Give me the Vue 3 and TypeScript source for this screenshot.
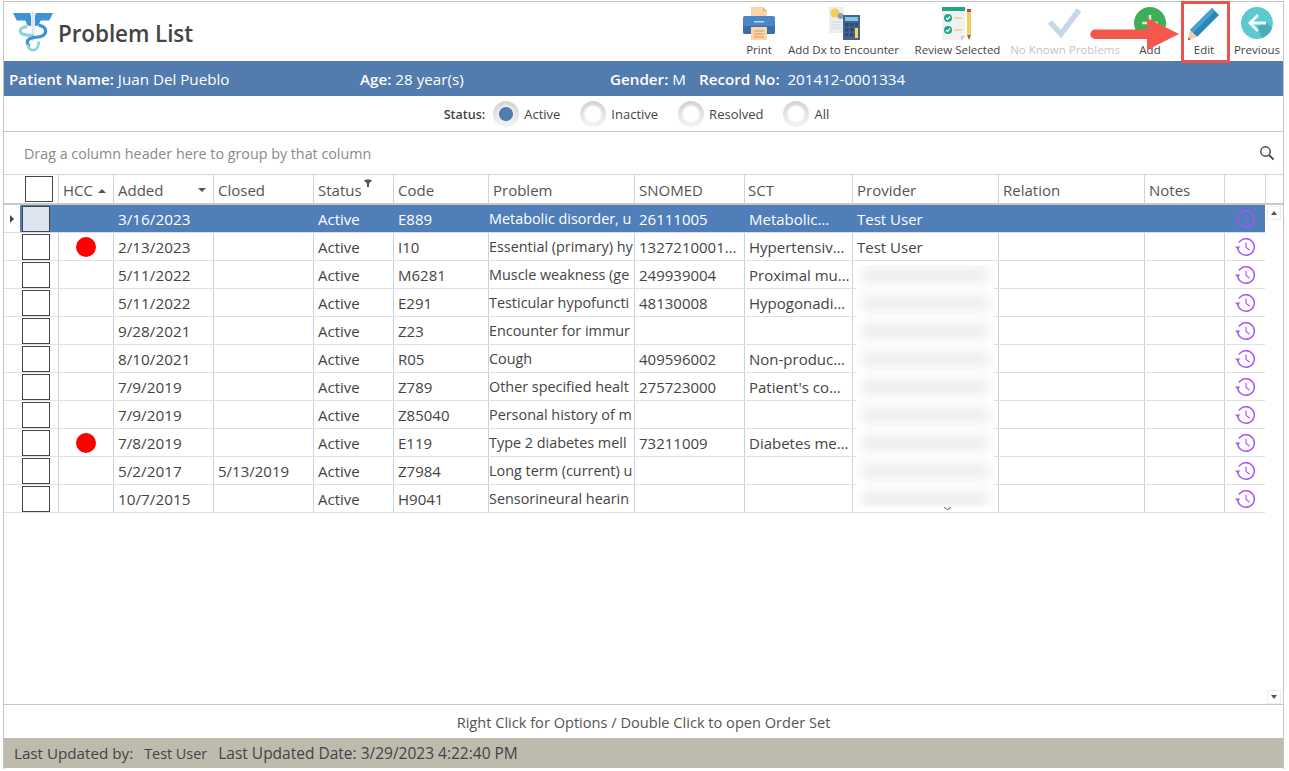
<script setup lang="ts">
interface Row { added: string; closed: string; code: string; problem: string; snomed: string; sct: string; provider: string; hcc: boolean }
const rows: Row[] = [
  { added: '3/16/2023', closed: '', code: 'E889', problem: 'Metabolic disorder, u', snomed: '26111005', sct: 'Metabolic…', provider: 'Test User', hcc: false },
  { added: '2/13/2023', closed: '', code: 'I10', problem: 'Essential (primary) hy', snomed: '1327210001…', sct: 'Hypertensiv…', provider: 'Test User', hcc: true },
  { added: '5/11/2022', closed: '', code: 'M6281', problem: 'Muscle weakness (ge', snomed: '249939004', sct: 'Proximal mu…', provider: '', hcc: false },
  { added: '5/11/2022', closed: '', code: 'E291', problem: 'Testicular hypofuncti', snomed: '48130008', sct: 'Hypogonadi…', provider: '', hcc: false },
  { added: '9/28/2021', closed: '', code: 'Z23', problem: 'Encounter for immur', snomed: '', sct: '', provider: '', hcc: false },
  { added: '8/10/2021', closed: '', code: 'R05', problem: 'Cough', snomed: '409596002', sct: 'Non-produc…', provider: '', hcc: false },
  { added: '7/9/2019', closed: '', code: 'Z789', problem: 'Other specified healt', snomed: '275723000', sct: "Patient's co…", provider: '', hcc: false },
  { added: '7/9/2019', closed: '', code: 'Z85040', problem: 'Personal history of m', snomed: '', sct: '', provider: '', hcc: false },
  { added: '7/8/2019', closed: '', code: 'E119', problem: 'Type 2 diabetes mell', snomed: '73211009', sct: 'Diabetes me…', provider: '', hcc: true },
  { added: '5/2/2017', closed: '5/13/2019', code: 'Z7984', problem: 'Long term (current) u', snomed: '', sct: '', provider: '', hcc: false },
  { added: '10/7/2015', closed: '', code: 'H9041', problem: 'Sensorineural hearin', snomed: '', sct: '', provider: '', hcc: false },
]
const statuses = ['Active', 'Inactive', 'Resolved', 'All']
const blurLines = Array.from({ length: 9 }, (_, i) => i)
</script>

<template>
  <div class="frame">
    <header class="top">
      <div class="brand">
        <svg class="logo" viewBox="0 0 42 42" width="40" height="40">
          <path d="M0 1h18l1 4v10l-4-1-2-5H4z" fill="#3d93d6"/>
          <path d="M42 1H24l-1 4v10l4-1 2-5h9z" fill="#3d93d6"/>
          <rect x="19.500" y="0" width="3" height="30" fill="#dfe6ea"/>
          <path d="M15 15c-9 1-10 8-2 9l9 1" fill="none" stroke="#8fd3e2" stroke-width="3.400"/>
          <path d="M27 14c9 1 10 10 1 12-9 1-13 2-13 6 0 2 2 3 3 3" fill="none" stroke="#3d93d6" stroke-width="3.400"/>
          <path d="M27 31c0 5-2 9-6 9s-6-4-5-6" fill="none" stroke="#8fd3e2" stroke-width="3"/>
        </svg>
        <h1>Problem List</h1>
      </div>
      <nav class="tools">
        <div class="tool t-print">
          <svg viewBox="0 0 34 34" width="34" height="34">
            <path d="M9 1h12l4 4v10H9z" fill="#fbd5a9"/>
            <path d="M21 1l4 4h-4z" fill="#e8b583"/>
            <path d="M3 10h28a2 2 0 0 1 2 2v14a2 2 0 0 1-2 2H3a2 2 0 0 1-2-2V12a2 2 0 0 1 2-2z" fill="#4a86c5"/>
            <path d="M1 20h32v6a2 2 0 0 1-2 2H3a2 2 0 0 1-2-2z" fill="#3a6ea5"/>
            <rect x="12" y="15" width="10" height="1.500" fill="#bcd6ee"/>
            <path d="M9 21h16v13H9z" fill="#fbd5a9"/>
            <path d="M12 25h10M12 28h10M12 31h10" stroke="#d19a66" stroke-width="1.200"/>
          </svg>
          <span>Print</span>
        </div>
        <div class="tool t-dx">
          <svg viewBox="0 0 34 34" width="34" height="34">
            <rect x="2" y="1" width="15" height="26" fill="#eceff1"/>
            <circle cx="8" cy="7" r="4.500" fill="#f4cf4e"/>
            <circle cx="13.500" cy="10" r="3" fill="#8aa0b5"/>
            <path d="M4 16h10M4 19h10M4 22h10" stroke="#cfd6da"/>
            <rect x="16" y="9" width="17" height="25" fill="#46638c"/>
            <rect x="18" y="11" width="13" height="4" fill="#79c8ee"/>
            <path d="M18 17h3.500v3.500H18zM23 17h3.500v3.500H23zM28 17h3v3.500h-3zM18 22h3.500v3.500H18zM23 22h3.500v3.500H23zM18 27h3.500v3.500H18zM23 27h3.500v3.500H23z" fill="#2f4a70"/>
            <rect x="28" y="22" width="3" height="10" fill="#f4d75e"/>
          </svg>
          <span>Add Dx to Encounter</span>
        </div>
        <div class="tool t-review">
          <svg viewBox="0 0 34 34" width="34" height="34">
            <path d="M1 1h23v30l-4 4H1z" fill="#eff1f2"/>
            <rect x="1" y="1" width="23" height="4" fill="#1fa982"/>
            <path d="M20 35v-5h4z" fill="#c9cdd0"/>
            <circle cx="7" cy="12" r="4" fill="#1fa982"/>
            <circle cx="7" cy="24" r="4" fill="#1fa982"/>
            <path d="M5 12l1.500 1.500L9 10.500M5 24l1.500 1.500L9 22.500" stroke="#fff" fill="none" stroke-width="1.200"/>
            <path d="M13 12h8M13 24h8" stroke="#f0b35a" stroke-width="1.200"/>
            <rect x="26" y="3" width="4" height="3" fill="#d33a6b"/>
            <rect x="26" y="6" width="4" height="23" fill="#f2cd5d"/>
            <path d="M26 29h4l-2 5z" fill="#7a6a4a"/>
          </svg>
          <span>Review Selected</span>
        </div>
        <div class="tool t-none disabled">
          <svg viewBox="0 0 34 34" width="34" height="34">
            <path d="M2 16l11 12L31 4" fill="none" stroke="#c7d6e8" stroke-width="5.500"/>
          </svg>
          <span>No Known Problems</span>
        </div>
        <div class="tool t-add">
          <svg viewBox="0 0 34 34" width="34" height="34">
            <circle cx="17" cy="17" r="16" fill="#3fae58"/>
            <path d="M17 9v16M9 17h16" stroke="#d7f0dc" stroke-width="2.500"/>
          </svg>
          <span>Add</span>
        </div>
        <div class="tool t-edit">
          <svg viewBox="0 0 34 34" width="34" height="34">
            <path d="M3 24L25 2l7 7-22 22z" fill="#2a87b5"/>
            <path d="M25 2l3 3L6 27l-3-3z" fill="#45a5cf"/>
            <path d="M3 24l7 7-9 3z" fill="#f6c9ae"/>
            <path d="M1 31l3 3-3 .5z" fill="#d9534a"/>
          </svg>
          <span>Edit</span>
        </div>
        <div class="tool t-prev">
          <svg viewBox="0 0 34 34" width="34" height="34">
            <circle cx="17" cy="17" r="16" fill="#5cc9d2"/>
            <path d="M17 21l9-5 6 6a16 16 0 0 1-10 10z" fill="#47adb8"/>
            <path d="M18 9l-8 8 8 8M10 17h16" fill="none" stroke="#eefafa" stroke-width="3"/>
          </svg>
          <span>Previous</span>
        </div>
      </nav>
    </header>

    <section class="patient">
      <span class="p-name"><b>Patient Name:</b> Juan Del Pueblo</span>
      <span class="p-age"><b>Age:</b> 28 year(s)</span>
      <span class="p-gender"><b>Gender:</b> M</span>
      <span class="p-rec"><b>Record No:</b>&nbsp; 201412-0001334</span>
    </section>

    <section class="status">
      <b>Status:</b>
      <label v-for="(s, i) in statuses" :key="s" class="radio">
        <i class="dot" :class="{ on: i === 0 }"></i><span>{{ s }}</span>
      </label>
    </section>

    <section class="grid-panel">
      <div class="group">
        <span>Drag a column header here to group by that column</span>
        <svg viewBox="0 0 16 16" width="16" height="16" class="search">
          <circle cx="6.500" cy="6.500" r="4.700" fill="none" stroke="#444" stroke-width="1.400"/>
          <path d="M10 10l4.500 4.500" stroke="#444" stroke-width="1.800"/>
        </svg>
      </div>

      <div class="grid">
        <div class="head">
          <div class="c c0"></div>
          <div class="c c1 chk"><i class="box"></i></div>
          <div class="c c2">HCC<i class="up"></i></div>
          <div class="c c3">Added<i class="down"></i></div>
          <div class="c c4">Closed</div>
          <div class="c c5">Status
            <svg class="filter" viewBox="0 0 8 8" width="8" height="8"><path d="M0 1.500C0 0 8 0 8 1.500L5 4.500V8H3V4.500z" fill="#555"/></svg>
          </div>
          <div class="c c6">Code</div>
          <div class="c c7">Problem</div>
          <div class="c c8">SNOMED</div>
          <div class="c c9">SCT</div>
          <div class="c c10">Provider</div>
          <div class="c c11">Relation</div>
          <div class="c c12">Notes</div>
          <div class="c c13"></div>
          <div class="c c14"></div>
        </div>

        <div class="body">
          <div class="rows">
            <div v-for="(r, i) in rows" :key="i" class="row" :class="{ sel: i === 0 }">
              <div class="c c0"><i v-if="i === 0" class="caret"></i></div>
              <div class="c c1 chk"><i class="box"></i></div>
              <div class="c c2"><i v-if="r.hcc" class="red"></i></div>
              <div class="c c3">{{ r.added }}</div>
              <div class="c c4">{{ r.closed }}</div>
              <div class="c c5">Active</div>
              <div class="c c6">{{ r.code }}</div>
              <div class="c c7">{{ r.problem }}</div>
              <div class="c c8">{{ r.snomed }}</div>
              <div class="c c9">{{ r.sct }}</div>
              <div class="c c10">{{ r.provider }}</div>
              <div class="c c11"></div>
              <div class="c c12"></div>
              <div class="c c13">
                <svg viewBox="0 0 21 20" width="21" height="20">
                  <path d="M4 5.500A8.300 8.300 0 1 1 2.700 10" fill="none" stroke="#a855f7" stroke-width="1.500"/>
                  <path d="M0 9.500h5.400l-2.700 3z" fill="#a855f7"/>
                  <path d="M11 5.500V10.500l3.500 2.500" fill="none" stroke="#a855f7" stroke-width="1.100"/>
                </svg>
              </div>
            </div>
          </div>
          <div class="scroll">
            <div class="sbtn"><i class="up sm"></i></div>
            <div class="sbtn"><i class="down sm"></i></div>
          </div>
          <div class="blur">
            <div v-for="n in blurLines" :key="n" class="bl"></div>
          </div>
          <svg class="desc" viewBox="0 0 7 3" width="7" height="3"><path d="M.500 0c0 3 6 3 6 0" fill="none" stroke="#555"/></svg>
        </div>
      </div>
    </section>

    <section class="hint">Right Click for Options / Double Click to open Order Set</section>
    <footer class="foot">
      <span>Last Updated by:</span><span class="f-user">Test User</span><span class="f-date">Last Updated Date: 3/29/2023 4:22:40 PM</span>
    </footer>

    <div class="edit-box"></div>
    <svg class="arrow" viewBox="0 0 90 34" width="90" height="34">
      <path d="M5 12.500H57V1L89 17 57 33V22H5a4.700 4.700 0 0 1 0-9.500z" fill="#f4574b"/>
    </svg>
  </div>
</template>

<style>
html, body { margin: 0; background: #fff; }
</style>

<style scoped>
* { box-sizing: border-box; }
.frame {
  position: relative;
  width: 1281px;
  height: 768px;
  margin: 1px 0 0 3px;
  border: 1px solid #c4c4c4;
  border-width: 1px 1px 0 1px;
  font-family: "Open Sans", "Noto Sans", sans-serif;
  color: #444;
  font-size: 15px;
  display: flex;
  flex-direction: column;
  background: #fff;
}
.top { height: 59px; display: flex; justify-content: space-between; }
.brand { display: flex; align-items: center; padding: 1px 0 0 9px; }
.logo { display: block; }
h1 { margin: 2px 0 0 5px; font-size: 22.500px; font-weight: 600; color: #444; letter-spacing: -.1px; }
.tools { display: flex; }
.tool { position: relative; display: flex; flex-direction: column; align-items: center; padding-top: 4px; font-size: 11.500px; white-space: nowrap; color: #444; }
.tool span { margin-top: 2px; line-height: 16px; }
.tool svg { display: block; }
.disabled { color: #c4c4c4; }
.t-print { width: 40px; margin-right: 5px; }
.t-dx { width: 119px; margin-right: 8px; }
.t-review { width: 93px; margin-right: 2px; }
.t-none { width: 118px; margin-right: 4px; }
.t-add { width: 44px; margin-right: 10px; }
.t-edit { width: 44px; margin-right: 5px; }
.t-prev { width: 52px; }
.patient { height: 35px; background: #527bae; color: #fff; display: flex; align-items: center; font-size: 15.200px; }
.patient b { font-weight: 600; }
.patient span { white-space: nowrap; }
.p-name { width: 356px; padding-left: 5px; }
.p-age { width: 250px; }
.p-gender { width: 89px; }
.status { height: 35px; display: flex; align-items: center; justify-content: center; font-size: 13px; padding-right: 14px; }
.status b { font-weight: 600; font-size: 12.500px; margin-right: 8px; padding-top: 1px; }
.radio { display: flex; align-items: center; margin-right: 20px; }
.radio span { padding-top: 1px; }
.radio:last-child { margin-right: 0; }
.dot { width: 26px; height: 26px; border-radius: 50%; margin-right: 5px; background: radial-gradient(circle, #fff 0 7px, rgba(255,255,255,0) 10px), linear-gradient(#d2d2d2, #f4f4f4); }
.dot.on { background: radial-gradient(circle, #527bae 0 6.500px, #eef1f5 7.500px, rgba(255,255,255,0) 10px), linear-gradient(#d2d2d2, #f4f4f4); }
.grid-panel { height: 574px; border-top: 1px solid #c8c8c8; border-bottom: 1px solid #c8c8c8; display: flex; flex-direction: column; }
.group { height: 43px; display: flex; align-items: center; justify-content: space-between; padding: 0 8px 0 20px; color: #8a8a8a; font-size: 14.300px; border-bottom: 1px solid #d4d4d4; }
.grid { flex: 1; display: flex; flex-direction: column; min-height: 0; }
.head { display: flex; height: 30px; border-bottom: 2px solid #c8c8c8; }
.head .c { border-right: 1px solid #d4d4d4; padding-left: 4px; line-height: 30px; color: #555; position: relative; }
.head .c0 { border-right: 0; }
.c { flex: none; overflow: hidden; white-space: nowrap; }
.c0 { width: 16px; }
.c1 { width: 39px; }
.c2 { width: 55px; }
.c3 { width: 100px; }
.c4 { width: 100px; }
.c5 { width: 80px; }
.c6 { width: 95px; }
.c7 { width: 146px; }
.c8 { width: 110px; }
.c9 { width: 108px; }
.c10 { width: 146px; }
.c11 { width: 146px; }
.c12 { width: 80px; }
.c13 { width: 41px; }
.c14 { width: 17px; border-right: 0 !important; }
.head .c9, .row .c9 { padding-left: 3px; }
.chk { display: flex; align-items: center; padding: 0 0 0 2px !important; }
.head .chk { padding-left: 5px !important; }
.box { width: 28px; height: 26px; border: 1px solid #444; background: #fff; display: block; flex: none; }
.up, .down { display: inline-block; width: 0; height: 0; border-left: 4px solid transparent; border-right: 4px solid transparent; }
.up { border-bottom: 4px solid #555; vertical-align: 3px; margin-left: 5px; }
.down { border-top: 4px solid #555; position: absolute; right: 7px; top: 13px; }
.filter { position: absolute; left: 50px; top: 4px; }
.body { flex: 1; display: flex; position: relative; min-height: 0; }
.rows { width: 1261px; flex: none; }
.row { display: flex; height: 28px; border-bottom: 1px solid #dde1e5; color: #444; line-height: 28px; font-size: 15px; }
.row .c { padding-left: 4px; border-right: 1px solid #c5d3e2; }
.row .c3 { font-size: 15.300px; }
.row .c7 { padding-left: 0; font-size: 14.400px; }
.row .c0 { border-right: 0; display: flex; align-items: center; padding-left: 6px; }
.row .c13 { width: 40px; border-right: 0; display: flex; align-items: center; justify-content: center; padding: 0; }
.row.sel { color: #fff; border-bottom-color: #d8dde3; }
.row.sel .c { background: #4f7eb9; border-right-color: #4f7eb9; }
.row.sel .c0 { background: #fff; }
.row.sel .box { background: #dce5f0; }
.caret { width: 0; height: 0; border-top: 4px solid transparent; border-bottom: 4px solid transparent; border-left: 4px solid #444; display: block; }
.red { display: block; width: 20px; height: 20px; border-radius: 50%; background: #f00; margin: 4px 0 0 13px; }
.scroll { width: 18px; flex: none; display: flex; flex-direction: column; justify-content: space-between; padding: 1px 2px 0 2px; }
.sbtn { width: 14px; height: 14px; border: 1px solid #eee; display: flex; align-items: center; justify-content: center; position: relative; }
.sm { margin: 0; position: static; vertical-align: 0; border-left-width: 3.500px; border-right-width: 3.500px; }
.blur { position: absolute; left: 852px; top: 60px; width: 138px; height: 242px; background: #fff; display: flex; flex-direction: column; gap: 14px; padding: 3px 6px 0; overflow: hidden; }
.bl { height: 14px; background: #dedede; opacity: .6; filter: blur(6px); flex: none; }
.desc { position: absolute; left: 940px; top: 302px; }
.hint { height: 33px; display: flex; align-items: center; justify-content: center; color: #555; font-size: 14.600px; }
.foot { height: 30px; background: #bdbaae; display: flex; align-items: center; gap: 11px; padding-left: 10px; color: #444; font-size: 15.200px; }
.f-user { font-size: 14.400px; }
.f-date { font-size: 15.500px; }
.edit-box { position: absolute; left: 1177px; top: -1px; width: 49px; height: 62px; border: 3px solid #e8554c; }
.arrow { position: absolute; left: 1086px; top: 15px; }
</style>
